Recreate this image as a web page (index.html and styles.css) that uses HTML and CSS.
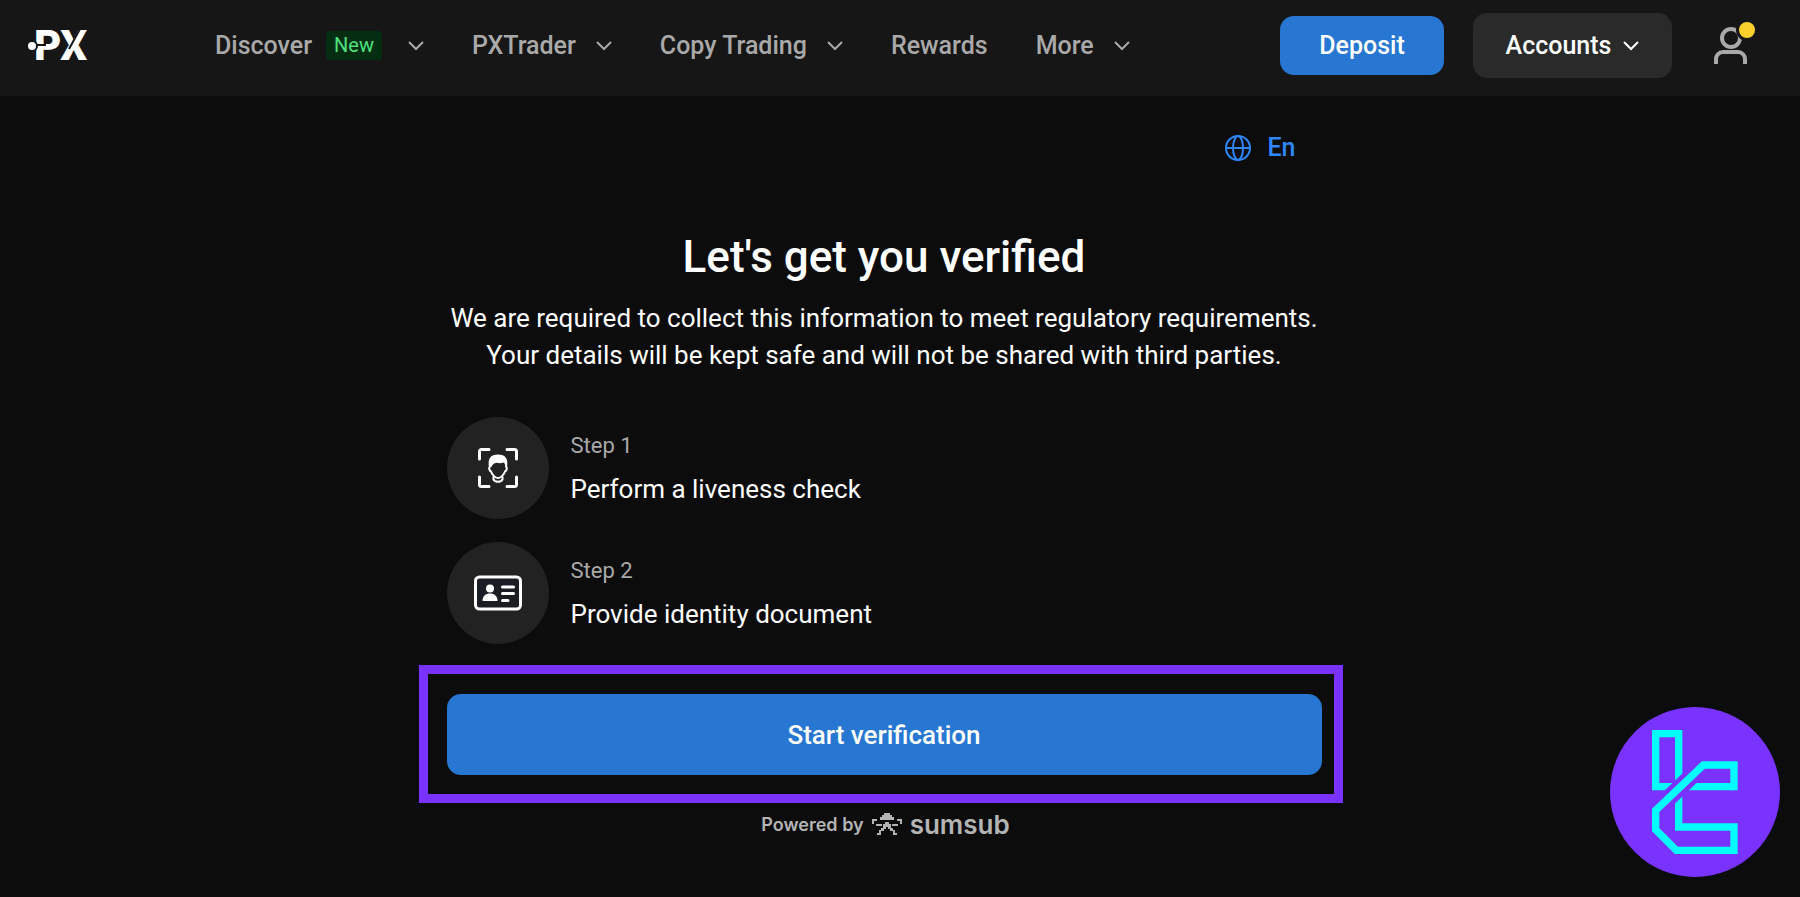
FILE: index.html
```html
<!DOCTYPE html>
<html lang="en">
<head>
  <meta charset="UTF-8" />
  <title>PX – Verification</title>
  <meta name="viewport" content="width=device-width, initial-scale=1" />
  <link rel="stylesheet" href="styles.css">
</head>
<body>

  <header class="header">
    <a href="#" class="logo" aria-label="PX home">
      <svg width="62" height="32" viewBox="0 0 62 32">
        <text class="logo-text" x="6" y="30">PX</text>
        <path class="logo-cut" d="M7 15h11" />
        <path class="logo-cut" d="M41 19L52-1" />
        <circle class="logo-dot-gap" cx="4" cy="16" r="6" />
        <circle class="logo-dot" cx="4" cy="16" r="4" />
      </svg>
    </a>

    <nav class="nav">
      <a href="#" class="nav-link">Discover <span class="badge">New</span>
        <svg class="chevron chevron-wide" viewBox="0 0 16 10"><path d="M1 1l7 7 7-7" /></svg>
      </a>
      <a href="#" class="nav-link">PXTrader
        <svg class="chevron" viewBox="0 0 16 10"><path d="M1 1l7 7 7-7" /></svg>
      </a>
      <a href="#" class="nav-link">Copy Trading
        <svg class="chevron" viewBox="0 0 16 10"><path d="M1 1l7 7 7-7" /></svg>
      </a>
      <a href="#" class="nav-link">Rewards</a>
      <a href="#" class="nav-link">More
        <svg class="chevron" viewBox="0 0 16 10"><path d="M1 1l7 7 7-7" /></svg>
      </a>
    </nav>

    <div class="actions">
      <button class="btn deposit">Deposit</button>
      <button class="btn accounts">Accounts
        <svg class="chevron" viewBox="0 0 16 10"><path d="M1 1l7 7 7-7" /></svg>
      </button>
      <button class="profile" aria-label="Profile">
        <svg width="44" height="44" viewBox="0 0 44 44">
          <path class="profile-line" d="M4 40v-5a7 7 0 0 1 7-7h15a7 7 0 0 1 7 7v5" />
          <circle class="profile-line" cx="19" cy="14" r="9" />
          <circle class="profile-gap" cx="35" cy="6" r="11" />
          <circle class="profile-dot" cx="35" cy="6" r="8" />
        </svg>
      </button>
    </div>
  </header>

  <main class="verify">
    <button class="language">
      <svg width="28" height="28" viewBox="0 0 28 28">
        <circle cx="14" cy="14" r="12" />
        <ellipse cx="14" cy="14" rx="5" ry="12" />
        <path d="M2 14h24" />
      </svg>
      En
    </button>

    <h1>Let's get you verified</h1>
    <p class="intro">We are required to collect this information to meet regulatory requirements.<br>
      Your details will be kept safe and will not be shared with third parties.</p>

    <ol class="steps">
      <li class="step">
        <span class="step-icon">
          <svg width="40" height="40" viewBox="0 0 40 40">
            <path class="line" d="M1.500 11V3.500a2 2 0 0 1 2-2H11M29 1.500h7.500a2 2 0 0 1 2 2V11M38.500 29v7.500a2 2 0 0 1-2 2H29M11 38.500H3.500a2 2 0 0 1-2-2V29" />
            <path class="face" d="M12 18c-1.500 2.500-.5 5 1 5.500 1 3 4 6.500 7 6.500s6-3.500 7-6.500c1.500-.5 2.500-3 1-5.500" />
            <path class="fill" d="M11 19C9.500 11 12.500 6.500 20 6.500S30.500 11 29 19h-1.500c0-2-.7-3.500-2-4.500-2.500 1-5 1-7 .3-2.500.2-4 1.700-5 4.200z" />
            <path class="face" d="M15.500 29v2.500c1.500 3 7.500 3 9 0V29" />
          </svg>
        </span>
        <div class="step-text">
          <span class="step-number">Step 1</span>
          <span class="step-title">Perform a liveness check</span>
        </div>
      </li>
      <li class="step">
        <span class="step-icon">
          <svg width="48" height="36" viewBox="0 0 48 36">
            <rect class="line card" x="1.500" y="2" width="45" height="32" rx="4" />
            <circle class="fill" cx="16" cy="13.500" r="4" />
            <path class="fill" d="M8.500 26c0-5 3-7.500 7.500-7.500s7.500 2.500 7.500 7.500z" />
            <path class="line" d="M28.500 12h11M28.500 18.500h11M28.500 25.500h5.500" />
          </svg>
        </span>
        <div class="step-text">
          <span class="step-number">Step 2</span>
          <span class="step-title">Provide identity document</span>
        </div>
      </li>
    </ol>

    <div class="highlight">
      <button class="btn start">Start verification</button>
    </div>

    <p class="powered">Powered by
      <svg width="30" height="24" viewBox="0 0 30 24">
        <path d="M12 0h6v2h2v2h2v3H8V4h2V2h2zM0 6h5v2H2v3H0zM25 6h5v5h-2V8h-3zM4 11h6v2H4zM20 11h6v2h-6zM13 9h4v2h2v4h2v3h-3v-2h-2v-2h-2v2h-2v2H9v-3h2v-4h2zM7 17h2v3H7zM21 17h2v3h-2zM5 20h4v2H5zM21 20h4v2h-4z" />
      </svg>
      <span class="sumsub">sumsub</span>
    </p>
  </main>

  <svg class="emblem" viewBox="60 51 510 510" aria-hidden="true">
    <circle cx="315" cy="306" r="255" />
    <path class="emblem-line" d="M250 290H197V131H266V280M432 290H280M266 290V411" />
    <path class="emblem-gap" d="M350 215L187 371" />
    <path class="emblem-line" d="M421 290H432V225H340L197 361V419L259 481H432V411H255" />
  </svg>

</body>
</html>
```
FILE: styles.css
```css
:root {
  --page: #0c0c0c;
  --bar: #161616;
  --blue: #2676d2;
  --violet: #7a33ff;
  --gray: #a9a9a9;
}
* {
  box-sizing: border-box;
}
body {
  margin: 0;
  background-color: var(--page);
  color: white;
  font-family: Roboto, sans-serif;
  font-size: 26px;
}
button {
  border: none;
  background: none;
  font: inherit;
  cursor: pointer;
}
a {
  text-decoration: none;
}

/* Top bar */
.header {
  display: flex;
  align-items: center;
  height: 96px;
  padding: 0 44px 5px 28px;
  background-color: var(--bar);
  font-size: 25px;
}
.logo {
  display: flex;
  margin-right: 125px;
}
.logo svg,
.profile svg {
  overflow: visible;
}
.logo-text {
  fill: white;
  font-size: 42px;
  font-weight: 900;
}
.logo-cut {
  stroke: var(--bar);
  stroke-width: 2;
}
.logo-dot-gap {
  fill: var(--bar);
}
.logo-dot {
  fill: white;
}
.nav {
  display: flex;
  gap: 48px;
}
.nav-link {
  display: flex;
  align-items: center;
  color: var(--gray);
  font-weight: 500;
}
.badge {
  margin-left: 14px;
  padding: 0 8px;
  border-radius: 4px;
  background-color: #042d12;
  color: #4fe07f;
  font-size: 20px;
  font-weight: 400;
  line-height: 29px;
}
.chevron {
  width: 16px;
  height: 10px;
  margin-left: 20px;
  fill: none;
  stroke: currentColor;
  stroke-width: 2;
}
.chevron-wide {
  margin-left: 26px;
}
.actions {
  display: flex;
  align-items: center;
  margin-left: auto;
}
.btn {
  border-radius: 14px;
  background-color: var(--blue);
  color: white;
  font-weight: 500;
}
.deposit {
  width: 164px;
  height: 59px;
}
.accounts {
  display: flex;
  align-items: center;
  justify-content: center;
  width: 199px;
  height: 65px;
  margin: 0 40px 0 29px;
  background-color: #2a2a2a;
}
.accounts .chevron {
  margin-left: 12px;
}
.profile {
  display: flex;
  padding: 0;
}
.profile-line {
  fill: none;
  stroke: var(--gray);
  stroke-width: 4;
}
.profile-gap {
  fill: var(--bar);
}
.profile-dot {
  fill: #fbd02d;
}

/* Verification */
.verify {
  display: flex;
  flex-direction: column;
  width: 100%;
  max-width: 907px;
  margin: 0 auto;
  padding: 37px 32px 0 0;
}
.language {
  display: flex;
  align-items: center;
  align-self: flex-end;
  gap: 15px;
  margin-right: 26px;
  padding: 0;
  color: #2f86f6;
  font-size: 25px;
  font-weight: 500;
  line-height: 30px;
}
.language svg {
  fill: none;
  stroke: currentColor;
  stroke-width: 2;
}
h1 {
  margin: 68px 0 17px;
  font-size: 44px;
  font-weight: 500;
  line-height: 52px;
  text-align: center;
}
.intro {
  margin: 0;
  line-height: 37px;
  text-align: center;
}
.steps {
  display: flex;
  flex-direction: column;
  gap: 23px;
  margin: 43px 0 50px;
  padding: 0;
  list-style: none;
}
.step {
  display: flex;
  align-items: center;
  gap: 22px;
}
.step-icon {
  display: flex;
  align-items: center;
  justify-content: center;
  width: 102px;
  height: 102px;
  border-radius: 50%;
  background-color: #222;
}
.line,
.face {
  fill: none;
  stroke: white;
  stroke-width: 3;
  stroke-linecap: round;
}
.face {
  stroke-width: 2;
}
.card {
  fill: #1a1e24;
}
.fill {
  fill: white;
}
.step-text {
  display: flex;
  flex-direction: column;
  gap: 11px;
}
.step-number {
  color: var(--gray);
  font-size: 22px;
  line-height: 30px;
}
.step-title {
  line-height: 34px;
}
.highlight {
  position: relative;
}
.highlight::before {
  content: "";
  position: absolute;
  inset: -29px -21px -28px -28px;
  border: 9px solid var(--violet);
  pointer-events: none;
}
.start {
  width: 100%;
  height: 81px;
}
.powered {
  display: flex;
  align-items: center;
  justify-content: center;
  gap: 8px;
  margin: 34px 0 0;
  padding-left: 3px;
  color: #b4b4b4;
  font-family: Inter, sans-serif;
  font-size: 18px;
  font-weight: 600;
  line-height: 32px;
}
.powered svg {
  fill: currentColor;
}
.sumsub {
  font-size: 26px;
}

/* Corner emblem */
.emblem {
  position: fixed;
  right: 20px;
  bottom: 20px;
  width: 170px;
  height: 170px;
  fill: var(--violet);
}
.emblem-line,
.emblem-gap {
  fill: none;
  stroke: #00ffff;
  stroke-width: 22;
}
.emblem-gap {
  stroke: var(--violet);
  stroke-width: 50;
}
```
